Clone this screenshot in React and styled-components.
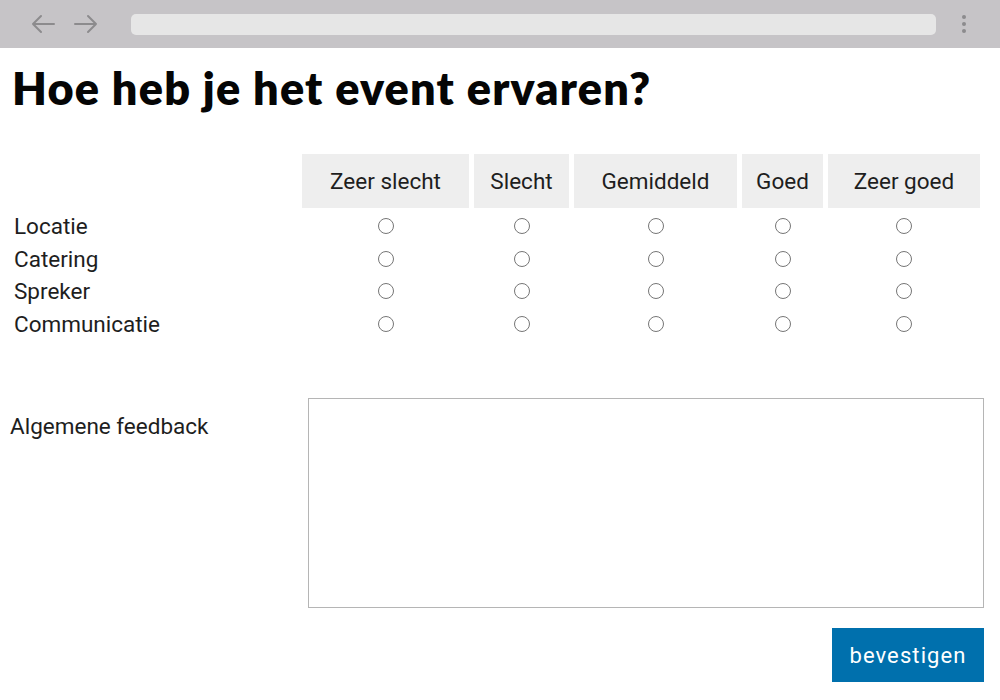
import React from 'react';
import styled, { createGlobalStyle } from 'styled-components';

const GlobalStyle = createGlobalStyle`
    html, body {
        margin: 0;
        padding: 0;
        background: #fff;
    }
    body {
        font-family: Roboto, "Liberation Sans", sans-serif;
        color: #1e1e1e;
    }
`;

const BrowserBar = styled.div`
    height: 48px;
    background: #c6c4c7;
    display: flex;
    align-items: center;
    box-sizing: border-box;
    padding: 0 24px 0 30px;
`;

const NavButtons = styled.div`
    display: flex;
    gap: 17px;
    align-items: center;
    width: 101px;
`;

const AddressBar = styled.div`
    flex: 1;
    height: 21px;
    background: #e6e6e6;
    border-radius: 5px;
`;

const MenuDots = styled.div`
    width: 40px;
    display: flex;
    justify-content: flex-end;
    padding-right: 9px;
    box-sizing: border-box;
`;

const Page = styled.main`
    padding: 0 16px 0 9px;
`;

const Title = styled.h1`
    font-family: Lato, "Open Sans", sans-serif;
    font-weight: 800;
    font-size: 45px;
    letter-spacing: 1.2px;
    margin: 0;
    padding: 14px 0 0 3px;
    height: 88px;
    box-sizing: border-box;
    line-height: 52px;
    color: #050505;
`;

const Grid = styled.div`
    display: grid;
    grid-template-columns: 288px 167px 95px 163px 81px 152px;
    column-gap: 5px;
    margin-top: 18px;
`;

const HeadCell = styled.div`
    background: #eeeeee;
    height: 54px;
    display: flex;
    align-items: center;
    justify-content: center;
    font-size: 22.5px;
    color: #1e1e1e;
`;

const Blank = styled.div``;

const RowLabel = styled.div`
    height: 32.7px;
    display: flex;
    align-items: center;
    padding-left: 5px;
    font-size: 22.5px;
    color: #1e1e1e;
`;

const RadioCell = styled.div`
    height: 32.7px;
    display: flex;
    align-items: center;
    justify-content: center;
`;

const Radio = styled.input.attrs({ type: 'radio' })`
    appearance: none;
    width: 16px;
    height: 16px;
    margin: 0;
    border: 1px solid #767676;
    border-radius: 50%;
    background: #fff;
    box-sizing: border-box;
    &:checked {
        background: radial-gradient(#0072b0 0 4px, #fff 4.5px);
        border-color: #0072b0;
    }
`;

const TopicRow = styled.div`
    display: contents;
`;

const Spacer = styled.div`
    grid-column: 1 / -1;
    height: 1.5px;
`;

const Feedback = styled.div`
    display: flex;
    margin-top: 58px;
    padding-left: 1px;
`;

const FeedbackLabel = styled.label`
    width: 298px;
    font-size: 22.5px;
    padding-top: 15px;
    color: #1e1e1e;
`;

const TextArea = styled.textarea`
    flex: 1;
    height: 210px;
    border: 1px solid #b5b5b5;
    box-sizing: border-box;
    resize: none;
    font-family: Roboto, sans-serif;
    font-size: 16px;
    margin: 0;
`;

const Actions = styled.div`
    display: flex;
    justify-content: flex-end;
    margin-top: 20px;
`;

const SubmitButton = styled.button`
    background: #0070ad;
    color: #fff;
    border: none;
    width: 152px;
    height: 54px;
    font-family: Roboto, sans-serif;
    font-size: 22px;
    letter-spacing: 1.1px;
    cursor: pointer;
`;

const levels = ['Zeer slecht', 'Slecht', 'Gemiddeld', 'Goed', 'Zeer goed'];
const topics = ['Locatie', 'Catering', 'Spreker', 'Communicatie'];

const Arrow = ({ left }) => (
    <svg width="26" height="20" viewBox="0 0 26 20" fill="none" stroke="#8c8b8d" strokeWidth="2" strokeLinecap="round" strokeLinejoin="round">
        {left
            ? <path d="M24 10H3M11 2L3 10l8 8" />
            : <path d="M2 10h21M15 2l8 8-8 8" />}
    </svg>
);

const Dots = () => (
    <svg width="6" height="20" viewBox="0 0 6 20" fill="#8c8b8d">
        <circle cx="3" cy="3" r="2" />
        <circle cx="3" cy="10" r="2" />
        <circle cx="3" cy="17" r="2" />
    </svg>
);

const App = () => {
    return (
        <>
            <GlobalStyle />
            <BrowserBar>
                <NavButtons>
                    <Arrow left />
                    <Arrow />
                </NavButtons>
                <AddressBar />
                <MenuDots><Dots /></MenuDots>
            </BrowserBar>
            <Page>
                <Title>Hoe heb je het event ervaren?</Title>
                <Grid>
                    <Blank />
                    {levels.map(l => <HeadCell key={l}>{l}</HeadCell>)}
                    <Spacer />
                    {topics.map(t => (
                        <TopicRow key={t}>
                            <RowLabel>{t}</RowLabel>
                            {levels.map(l => (
                                <RadioCell key={l}>
                                    <Radio name={t} value={l} />
                                </RadioCell>
                            ))}
                        </TopicRow>
                    ))}
                </Grid>
                <Feedback>
                    <FeedbackLabel htmlFor="feedback">Algemene feedback</FeedbackLabel>
                    <TextArea id="feedback" />
                </Feedback>
                <Actions>
                    <SubmitButton>bevestigen</SubmitButton>
                </Actions>
            </Page>
        </>
    );
};

export default App;
